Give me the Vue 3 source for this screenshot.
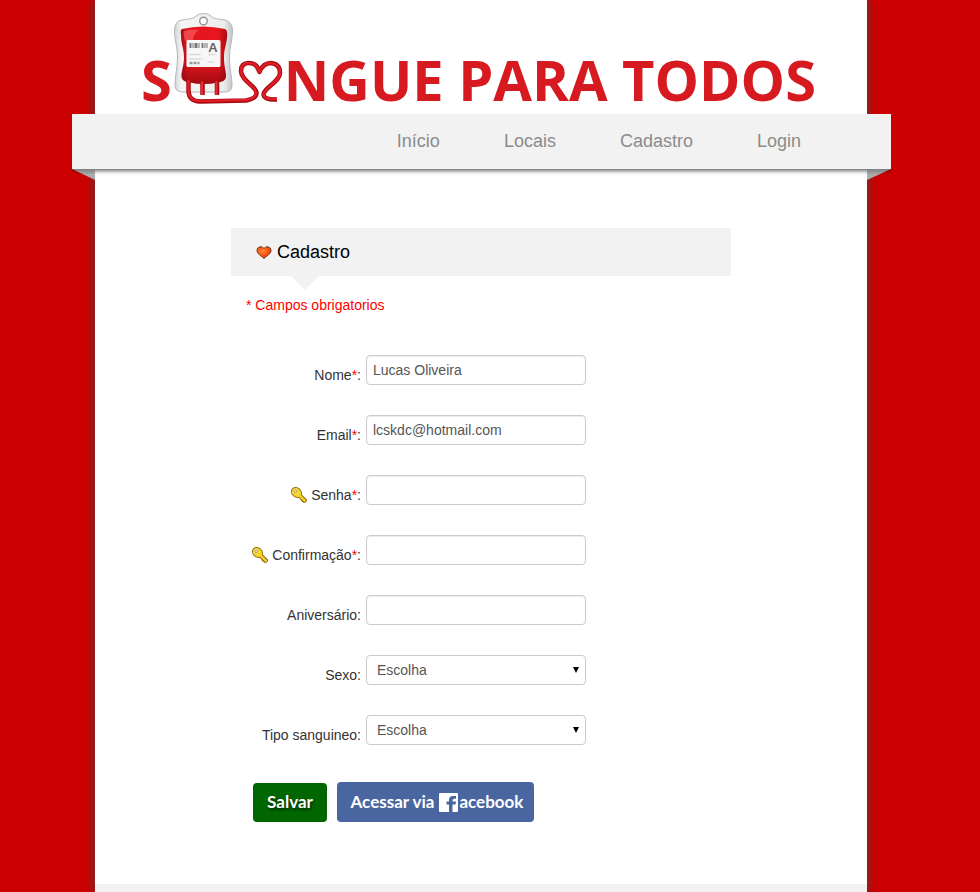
<script setup>
import { reactive } from 'vue'

const links = ['Início', 'Locais', 'Cadastro', 'Login']

const fields = [
  { id: 'nome', label: 'Nome', type: 'text', required: true },
  { id: 'email', label: 'Email', type: 'email', required: true },
  { id: 'senha', label: 'Senha', type: 'password', required: true, key: true },
  { id: 'confirmacao', label: 'Confirmação', type: 'password', required: true, key: true },
  { id: 'aniversario', label: 'Aniversário', type: 'text' },
  { id: 'sexo', label: 'Sexo', options: ['Feminino', 'Masculino'] },
  { id: 'tipo', label: 'Tipo sanguineo', options: ['A+', 'A-', 'B+', 'B-', 'AB+', 'AB-', 'O+', 'O-'] },
]

const form = reactive({
  nome: 'Lucas Oliveira',
  email: 'lcskdc@hotmail.com',
  senha: '',
  confirmacao: '',
  aniversario: '',
  sexo: '',
  tipo: '',
})
</script>

<template>
  <div class="backdrop">
    <div class="page">
      <header class="brand">
        <span class="brand-text">S</span>
        <svg class="brand-art" viewBox="0 0 112 96" aria-hidden="true">
          <defs>
            <linearGradient id="bag" x1="0" x2="1" y1="0" y2="0">
              <stop offset="0" stop-color="#d2d3d5" />
              <stop offset=".12" stop-color="#f5f5f6" />
              <stop offset=".85" stop-color="#ededee" />
              <stop offset="1" stop-color="#c3c4c7" />
            </linearGradient>
            <linearGradient id="blood" x1="0" x2="1" y1="0" y2="0">
              <stop offset="0" stop-color="#a30d12" />
              <stop offset=".15" stop-color="#e2171f" />
              <stop offset=".8" stop-color="#e8151e" />
              <stop offset="1" stop-color="#a80c12" />
            </linearGradient>
            <linearGradient id="depth" x1="0" x2="0" y1="0" y2="1">
              <stop offset=".6" stop-color="#8c070c" stop-opacity="0" />
              <stop offset="1" stop-color="#8c070c" stop-opacity=".75" />
            </linearGradient>
          </defs>
          <path d="M10 9C16 8 22 8 24 5Q26 2.500 31.500 2.500T39 5C41 8 47 8 53 9Q61 11 60.500 21C60 31 57.500 36 57.500 46C57.500 58 60 66 60 75Q60 81 52 81H11Q3 81 3 74C3 65 5.500 57 5.500 46C5.500 35 2.500 30 2.500 20Q2.500 10 10 9Z" fill="url(#bag)" stroke="#b5b6b9" />
          <circle cx="31.500" cy="10" r="3.800" fill="#fff" stroke="#909399" stroke-width="1.400" />
          <path d="M10 18Q31 13 53 18Q56 19 55 27C54 35 52 38 52 47C52 56 54 60 54 65Q54 70 48 71Q31 75 16 71Q9 70 9.500 64C10 58 12 54 12 46C12 37 9 34 9 24Q8 19 10 18Z" fill="url(#blood)" />
          <path d="M10 18Q31 13 53 18Q56 19 55 27C54 35 52 38 52 47C52 56 54 60 54 65Q54 70 48 71Q31 75 16 71Q9 70 9.500 64C10 58 12 54 12 46C12 37 9 34 9 24Q8 19 10 18Z" fill="url(#depth)" />
          <path d="M12 20Q19 18 27 19Q21 23 21 30H13Q11 23 12 20Z" fill="#ff7777" opacity=".5" />
          <rect x="14.500" y="29" width="34" height="27" rx="1.500" fill="#f8f7f7" />
          <path d="M17.500 34.500h2m1 0h1m1 0h3m1 0h1m2 0h2m1 0h1m1 0h1" stroke="#787878" stroke-width="5" />
          <path d="M17.500 43.500h11m8 0h7M17.500 48h13m6 3h6" stroke="#cecece" stroke-width="1.500" stroke-dasharray="2 1" />
          <path d="M17.500 52h10" stroke="#999" stroke-width="2.500" stroke-dasharray="3 1" />
          <text x="41" y="41" text-anchor="middle" class="blood-type">A</text>
          <g fill="none" stroke-linecap="butt" stroke-linejoin="round">
            <path d="M30.500 70v14M45 70v14" stroke="#a50d13" stroke-width="4.500" />
            <path d="M30 70v14M44.500 70v14" stroke="#ed2831" stroke-width="2.200" />
            <path class="tube-edge" d="M16.500 69V80Q17 90.500 28 90.500L74 89.500Q84.500 87.500 84.500 82C84.500 75 69 70 69 60Q69 52 77 52Q85 52 87.500 61Q91 52 99 52Q108 53 108 62C108 71 91 77 91.500 84Q92.500 89 105 88.500" />
            <path class="tube-light" d="M16.500 69V80Q17 90 28 90L74 89Q84 87 84 82C84 75 69 70 69 60Q69 52 77 52Q85 52 87.500 61Q91 52 99 52Q108 53 108 62C108 71 91 77 91.500 84Q92.500 88.500 105 88" />
          </g>
        </svg>
        <span class="brand-text">NGUE PARA TODOS</span>
      </header>

      <nav class="menu">
        <a v-for="link in links" :key="link" href="#">{{ link }}</a>
      </nav>

      <main class="content">
        <form class="signup" @submit.prevent>
          <h1>
            <svg class="heart" viewBox="0 0 16 14" aria-hidden="true">
              <defs>
                <radialGradient id="glow" cx=".4" cy=".35" r=".7">
                  <stop offset="0" stop-color="#ff8a3a" />
                  <stop offset=".5" stop-color="#fb5a12" />
                  <stop offset="1" stop-color="#cf3204" />
                </radialGradient>
              </defs>
              <path d="M8 3.500C6.500 1 1 1 1 5.500C1 9 5 10.500 8 13.500C11 10.500 15 9 15 5.500C15 1 9.500 1 8 3.500Z" fill="url(#glow)" stroke="#743828" />
            </svg>
            Cadastro
          </h1>
          <p class="note">* Campos obrigatorios</p>

          <div v-for="field in fields" :key="field.id" class="row">
            <label :for="field.id">
              <svg v-if="field.key" class="key" viewBox="0 0 16 16" aria-hidden="true">
                <path d="M8 8L15 15" stroke="#7d5d10" stroke-width="4.500" />
                <path d="M10.500 14l3-3" stroke="#7d5d10" stroke-width="2.500" />
                <ellipse cx="5.500" cy="5.500" rx="5.500" ry="4.500" transform="rotate(45 5.500 5.500)" fill="#f7d62e" stroke="#94731b" />
                <path d="M7.500 7.500L14.500 14.500" stroke="#f5cf25" stroke-width="2.500" />
                <path d="M2 6Q2.500 2.500 6 2" fill="none" stroke="#fff4a0" stroke-width="1.200" />
                <circle cx="4.200" cy="4.200" r="1.300" fill="#fff" stroke="#9d7b20" stroke-width=".8" />
              </svg>
              <span>{{ field.label }}<span v-if="field.required" class="star">*</span>:</span>
            </label>
            <div v-if="field.options" class="picker">
              <select :id="field.id" v-model="form[field.id]">
                <option value="">Escolha</option>
                <option v-for="option in field.options" :key="option">{{ option }}</option>
              </select>
              <svg class="arrow" viewBox="0 0 6 6" aria-hidden="true"><path d="M0 0h6L3 6Z" /></svg>
            </div>
            <input v-else :id="field.id" v-model="form[field.id]" :type="field.type" />
          </div>

          <div class="actions">
            <button class="save" type="submit">Salvar</button>
            <button class="facebook" type="button" aria-label="Acessar via Facebook">
              <span>Acessar via</span>
              <svg viewBox="0 0 19 19" aria-hidden="true">
                <rect width="19" height="19" rx="1" fill="#fff" />
                <path d="M10 19V11.500H7.500V8.500H10V7Q10 3 14 3h3v2.800h-2Q13.500 5.800 13.500 7.500v1H17l-.5 3h-3V19Z" fill="#4a66a0" />
              </svg>
              <span>acebook</span>
            </button>
          </div>
        </form>
      </main>
      <footer class="footer"></footer>
    </div>
  </div>
</template>

<style>
body {
  margin: 0;
  background: #cc0000;
}
</style>

<style scoped>
.backdrop {
  box-sizing: border-box;
  min-height: 100vh;
  padding: 0 113px 0 95px;
  display: flex;
  justify-content: center;
  overflow: hidden;
  font: 14px/20px "Liberation Sans", Arial, sans-serif;
  color: #333;
}
.page {
  flex: 1;
  max-width: 772px;
  display: flex;
  flex-direction: column;
  background: #fff;
  box-shadow: 0 0 10px #444;
}
.brand {
  display: flex;
  align-items: flex-end;
  justify-content: center;
  height: 107px;
  padding-bottom: 7px;
  padding-right: 5px;
}
.brand-text {
  font: bold 56px/56px "Open Sans", "Noto Sans", sans-serif;
  color: #d71920;
  white-space: nowrap;
}
.brand-art {
  width: 112px;
  height: 96px;
  flex: none;
}
.blood-type {
  font: bold 13px "Liberation Sans", Arial, sans-serif;
  fill: #666;
}
.tube-edge {
  stroke: #a00a10;
  stroke-width: 4.5;
}
.tube-light {
  stroke: #e01c26;
  stroke-width: 2.6;
}
.menu {
  position: relative;
  display: flex;
  justify-content: flex-end;
  gap: 64px;
  margin: 0 -24px 0 -23px;
  padding: 0 90px 0 0;
  background: #f2f2f2;
  box-shadow: 0 2px 4px rgba(0, 0, 0, 0.6);
  clip-path: inset(0 0 -12px 0);
}
.menu::before,
.menu::after {
  content: "";
  position: absolute;
  top: 100%;
  width: 23px;
  height: 11px;
  background: linear-gradient(#808080, #aaa 50%);
}
.menu::before {
  left: 0;
  clip-path: polygon(0 0, 100% 0, 100% 100%);
}
.menu::after {
  right: 0;
  width: 24px;
  clip-path: polygon(0 0, 100% 0, 0 100%);
}
.menu a {
  font-size: 18px;
  line-height: 55px;
  color: #8b8b8b;
  text-decoration: none;
}
.content {
  flex: 1;
  padding: 59px 0 62px;
}
.signup {
  max-width: 500px;
  margin: 0 auto;
}
h1 {
  position: relative;
  display: flex;
  align-items: center;
  gap: 5px;
  margin: 0;
  padding: 0 25px;
  background: #f2f2f2;
  font-size: 18px;
  font-weight: normal;
  line-height: 48px;
  color: #000;
}
h1::after {
  content: "";
  position: absolute;
  top: 100%;
  left: 60px;
  border: 14px solid transparent;
  border-top-color: #f2f2f2;
  border-bottom: 0;
}
.heart {
  width: 16px;
  height: 14px;
}
.note {
  margin: 0 0 40px;
  padding: 19px 15px 0;
  color: #ff0000;
}
.row {
  display: grid;
  grid-template-columns: 130px 220px;
  column-gap: 5px;
  align-items: end;
  margin-bottom: 30px;
}
.row label {
  display: flex;
  justify-content: flex-end;
  align-items: center;
  gap: 4px;
  white-space: nowrap;
}
.key {
  width: 16px;
  height: 16px;
}
.star {
  color: #ff0000;
}
.picker {
  position: relative;
}
input,
select {
  display: block;
  box-sizing: border-box;
  width: 100%;
  height: 30px;
  margin: 0;
  padding: 4px 6px;
  border: 1px solid #ccc;
  border-radius: 4px;
  background: #fff;
  font: 14px/20px "Liberation Sans", Arial, sans-serif;
  color: #555;
}
input {
  box-shadow: inset 0 1px 1px rgba(0, 0, 0, 0.08);
}
select {
  padding: 4px 10px;
  appearance: none;
}
.arrow {
  position: absolute;
  top: 12px;
  right: 7px;
  width: 6px;
  height: 6px;
  pointer-events: none;
}
.actions {
  display: flex;
  align-items: flex-end;
  gap: 10px;
  padding: 7px 22px 0;
}
button {
  height: 40px;
  margin: 0;
  padding: 0;
  border: 0;
  border-radius: 4px;
  font: bold 17px/20px Lato, sans-serif;
  color: #fff;
}
.save {
  width: 74px;
  height: 39px;
  padding-bottom: 2px;
  background: #006600;
  text-shadow: 1px 2px 3px rgba(0, 0, 0, 0.6);
}
.facebook {
  display: flex;
  align-items: center;
  justify-content: center;
  width: 197px;
  padding-left: 3px;
  background: #4a66a0;
}
.facebook svg {
  width: 19px;
  height: 19px;
  margin: 0 1px 0 5px;
}
.footer {
  height: 8px;
  background: #f2f2f2;
}
</style>
